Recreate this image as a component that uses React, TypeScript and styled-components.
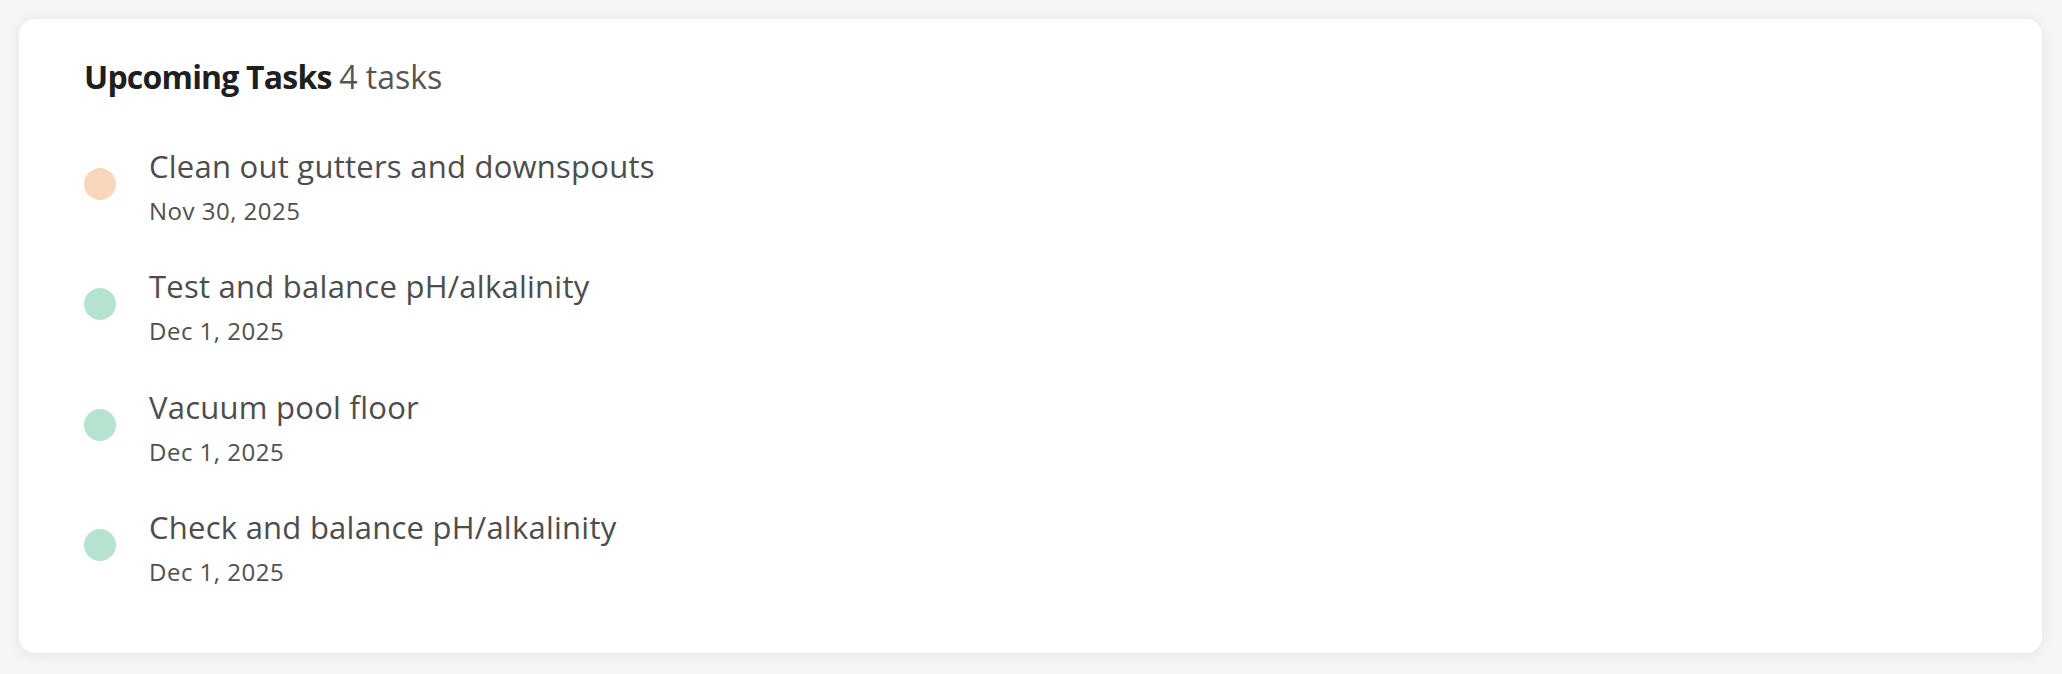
import React from "react";
import styled, { createGlobalStyle } from "styled-components";

const GlobalStyle = createGlobalStyle`
  html, body {
    margin: 0;
    padding: 0;
    background: #f5f5f5;
  }
  body {
    font-family: "Open Sans", "Noto Sans", sans-serif;
  }
`;

const Page = styled.div`
  padding: 19px 20px 21px 19px;
`;

const Card = styled.section`
  background: #ffffff;
  border-radius: 16px;
  box-shadow: 0 2px 14px rgba(0, 0, 0, 0.07);
  padding: 38px 64px 65px 65px;
`;

const Header = styled.h2`
  margin: 0;
  font-size: 32px;
  line-height: 40px;
  font-weight: 700;
  letter-spacing: -0.8px;
  color: #1f1f1f;
`;

const Count = styled.span`
  font-weight: 400;
  letter-spacing: 0;
  color: #555555;
`;

const List = styled.ul`
  list-style: none;
  margin: 48.5px 0 0;
  padding: 0;
  display: flex;
  flex-direction: column;
  gap: 39.5px;
`;

const Row = styled.li`
  display: flex;
  align-items: flex-start;
  gap: 33px;
`;

const Dot = styled.span<{ $color: string }>`
  flex: none;
  width: 32px;
  height: 32px;
  margin-top: 22px;
  border-radius: 50%;
  background: ${(p) => p.$color};
`;

const Info = styled.div`
  display: flex;
  flex-direction: column;
  gap: 9px;
`;

const TaskTitle = styled.div`
  font-size: 31px;
  line-height: 40px;
  letter-spacing: 0.25px;
  color: #4d4d4d;
`;

const TaskDate = styled.div`
  font-size: 24px;
  line-height: 32px;
  letter-spacing: 0.5px;
  color: #505050;
`;

const tasks = [
  { title: "Clean out gutters and downspouts", date: "Nov 30, 2025", color: "#f9d6bb" },
  { title: "Test and balance pH/alkalinity", date: "Dec 1, 2025", color: "#b6e3cf" },
  { title: "Vacuum pool floor", date: "Dec 1, 2025", color: "#b6e3cf" },
  { title: "Check and balance pH/alkalinity", date: "Dec 1, 2025", color: "#b6e3cf" },
];

export default function App() {
  return (
    <>
      <GlobalStyle />
      <Page>
        <Card>
          <Header>
            Upcoming Tasks <Count>{tasks.length} tasks</Count>
          </Header>
          <List>
            {tasks.map((t) => (
              <Row key={t.title}>
                <Dot $color={t.color} />
                <Info>
                  <TaskTitle>{t.title}</TaskTitle>
                  <TaskDate>{t.date}</TaskDate>
                </Info>
              </Row>
            ))}
          </List>
        </Card>
      </Page>
    </>
  );
}
